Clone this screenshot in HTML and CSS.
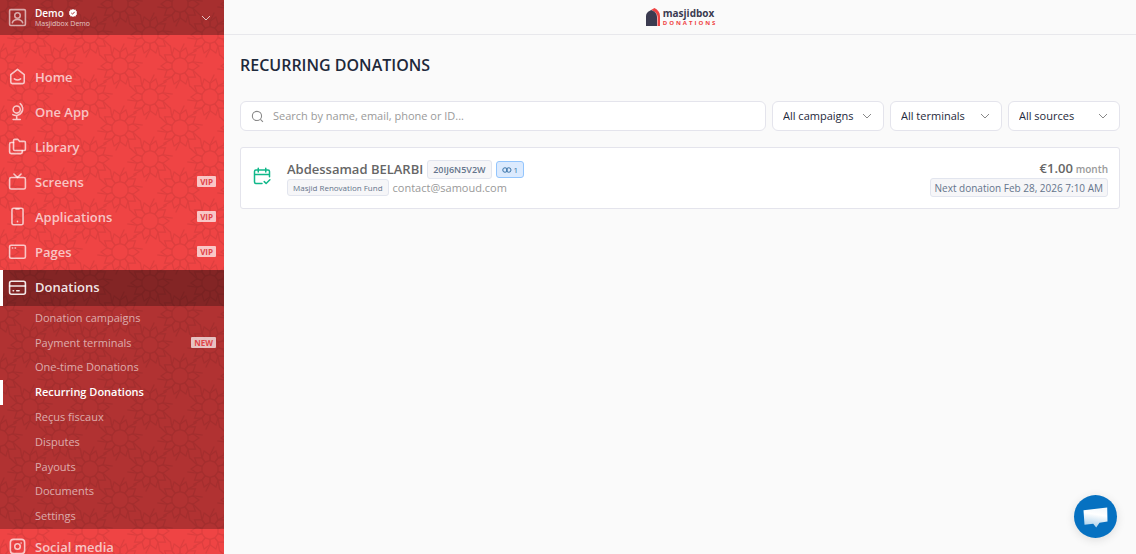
FILE: index.html
```
<!DOCTYPE html>
<html lang="en">
<head>
    <meta charset="UTF-8">
    <meta name="viewport" content="width=device-width, initial-scale=1.0">
    <title>Recurring donations</title>
    <link rel="stylesheet" href="styles.css">
</head>
<body>
    <aside class="sidebar">
        <svg class="pattern" aria-hidden="true">
            <defs>
                <g id="petal" fill="none" stroke="#000" stroke-width="1.2">
                    <path d="M8 -2.600L13 -4.200L19 0L13 4.200L8 2.600z"/>
                    <path d="M13 4.200L20 11"/>
                </g>
                <g id="rosette">
                    <use href="#petal"/>
                    <use href="#petal" transform="rotate(36)"/>
                    <use href="#petal" transform="rotate(72)"/>
                    <use href="#petal" transform="rotate(108)"/>
                    <use href="#petal" transform="rotate(144)"/>
                    <use href="#petal" transform="rotate(180)"/>
                    <use href="#petal" transform="rotate(216)"/>
                    <use href="#petal" transform="rotate(252)"/>
                    <use href="#petal" transform="rotate(288)"/>
                    <use href="#petal" transform="rotate(324)"/>
                </g>
                <pattern id="stars" y="4" width="60" height="62" patternUnits="userSpaceOnUse">
                    <use href="#rosette"/>
                    <use href="#rosette" x="60"/>
                    <use href="#rosette" y="62"/>
                    <use href="#rosette" x="60" y="62"/>
                    <use href="#rosette" x="30" y="31"/>
                </pattern>
            </defs>
            <rect width="100%" height="100%" fill="url(#stars)"/>
        </svg>
        <button type="button" class="account">
            <svg class="icon" viewBox="0 0 24 24"><rect x="2" y="2" width="20" height="20" rx="1.500"/><circle cx="12" cy="9.500" r="3.500"/><path d="M5.500 18.500c1-3 3.500-4 6.500-4s5.500 1 6.500 4"/></svg>
            <span class="account-text">
                <span class="account-name">Demo
                    <svg class="verified" viewBox="0 0 24 24"><path fill="#fff" d="M12 0l3.500 2 4-.2 1.300 3.800L24 8l-1.200 4L24 16l-3.200 2.400-1.300 3.800-4-.2L12 24l-3.500-2-4 .2-1.300-3.800L0 16l1.200-4L0 8l3.200-2.400 1.300-3.800 4 .2z"/><path d="M7 12l3.500 3.500L17 8.500" fill="none" stroke="#a52d2f" stroke-width="3"/></svg>
                </span>
                <span class="account-sub">Masjidbox Demo</span>
            </span>
            <svg class="chevron" viewBox="0 0 12 12"><path d="M2 4l4 4 4-4"/></svg>
        </button>
        <nav class="menu">
            <a href="#" class="menu-item">
                <svg class="icon" viewBox="0 0 24 24"><path d="M3.500 9.500L12 3l8.500 6.500V19a2 2 0 0 1-2 2h-13a2 2 0 0 1-2-2z"/><path d="M8 15c2.500 1.700 5.500 1.700 8 0"/></svg>
                Home
            </a>
            <a href="#" class="menu-item">
                <svg class="icon" viewBox="0 0 24 24"><circle cx="11" cy="9.500" r="4.500"/><path d="M15.500 2A8.500 8.500 0 0 1 6 16M11 17.500V22M6.500 22h9"/></svg>
                One App
            </a>
            <a href="#" class="menu-item">
                <svg class="icon" viewBox="0 0 24 24"><path d="M7 4.500A1.500 1.500 0 0 1 8.500 3h4l2 2.500h6A1.500 1.500 0 0 1 22 7v8.500a1.500 1.500 0 0 1-1.500 1.500h-12A1.500 1.500 0 0 1 7 15.500z"/><path d="M7 7H4a2 2 0 0 0-2 2v10a2 2 0 0 0 2 2h12a2 2 0 0 0 2-2v-2"/></svg>
                Library
            </a>
            <a href="#" class="menu-item">
                <svg class="icon" viewBox="0 0 24 24"><rect x="2" y="7" width="20" height="14.500" rx="2"/><path d="M7.500 2.500L12 7l4.500-4.500"/></svg>
                Screens <span class="tag">VIP</span>
            </a>
            <a href="#" class="menu-item">
                <svg class="icon" viewBox="0 0 24 24"><rect x="5" y="1.500" width="14" height="21" rx="2"/><path d="M10 2.500h4M12 18v.5"/></svg>
                Applications <span class="tag">VIP</span>
            </a>
            <a href="#" class="menu-item">
                <svg class="icon" viewBox="0 0 24 24"><rect x="2" y="4" width="20" height="16.500" rx="2"/><path d="M5.500 7.500h.5M9 7.500h.5"/></svg>
                Pages <span class="tag">VIP</span>
            </a>
            <a href="#" class="menu-item active">
                <svg class="icon" viewBox="0 0 24 24"><rect x="2" y="4" width="20" height="16.500" rx="2.500"/><path d="M2 10h20M6.500 16H7M11 16h3"/></svg>
                Donations
            </a>
            <div class="submenu">
                <a href="#">Donation campaigns</a>
                <a href="#">Payment terminals <span class="tag">NEW</span></a>
                <a href="#">One-time Donations</a>
                <a href="#" class="current">Recurring Donations</a>
                <a href="#">Reçus fiscaux</a>
                <a href="#">Disputes</a>
                <a href="#">Payouts</a>
                <a href="#">Documents</a>
                <a href="#">Settings</a>
            </div>
            <a href="#" class="menu-item">
                <svg class="icon" viewBox="0 0 24 24"><rect x="3" y="3" width="18" height="18" rx="4"/><circle cx="12" cy="12" r="3.500"/><path d="M16.500 7.500h.2"/></svg>
                Social media
            </a>
        </nav>
    </aside>

    <div class="page">
        <header class="topbar">
            <a href="#" class="logo">
                <svg class="logo-mark" viewBox="0 0 14 18"><path fill="#ef4444" d="M5 2l3.500-2C12 2 14 4.500 14 8v10h-2.500V9C11.500 5.500 9 3.500 5 2z"/><path fill="#3b3b50" d="M0 18V8c0-3 2-4.500 5.200-6C9 3.500 11 5.500 11 8.500V18z"/></svg>
                <span class="logo-text">
                    <span class="logo-name">masjidbox</span>
                    <span class="logo-sub">DONATIONS</span>
                </span>
            </a>
        </header>
        <main class="content">
            <h1>RECURRING DONATIONS</h1>
            <form class="filters">
                <label class="search">
                    <svg class="search-icon" viewBox="0 0 24 24"><circle cx="11" cy="11" r="8.500"/><path d="M17.500 17.500L22 22"/></svg>
                    <input type="search" aria-label="Search donations" placeholder="Search by name, email, phone or ID...">
                </label>
                <select aria-label="Campaign"><option>All campaigns</option></select>
                <select aria-label="Terminal"><option>All terminals</option></select>
                <select aria-label="Source"><option>All sources</option></select>
            </form>
            <article class="donation">
                <svg class="calendar" viewBox="0 0 24 24"><path d="M22 13V6a2 2 0 0 0-2-2H4a2 2 0 0 0-2 2v14a2 2 0 0 0 2 2h8M2 10h20M7 1.500v5M17 1.500v5M15 19.500l2.500 2.500 5-5"/></svg>
                <div class="donor">
                    <div class="row">
                        <span class="name">Abdessamad BELARBI</span>
                        <span class="badge code">20IJ6N5V2W</span>
                        <span class="badge count"><svg viewBox="0 0 20 16"><circle cx="6" cy="8" r="4.500"/><circle cx="13.500" cy="8" r="4.500"/></svg>1</span>
                    </div>
                    <div class="row">
                        <span class="badge fund">Masjid Renovation Fund</span>
                        <span class="email">contact@samoud.com</span>
                    </div>
                </div>
                <div class="amount">
                    <div><span class="price">€1.00</span> <span class="period">month</span></div>
                    <span class="badge next">Next donation Feb 28, 2026 7:10 AM</span>
                </div>
            </article>
        </main>
    </div>

    <button type="button" class="chat" aria-label="Open chat">
        <svg viewBox="0 0 26 22"><defs><linearGradient id="bubble" x1=".6" y1="0" x2=".4" y2="1"><stop offset="0" stop-color="#f2f8fc"/><stop offset=".35" stop-color="#fff"/><stop offset="1" stop-color="#a9cfea"/></linearGradient></defs><path fill="url(#bubble)" d="M.5 4.200L24.200 1.500l.3 14-8 1.300-3.300 4.700-3-3.700-8.700 1z"/></svg>
    </button>
</body>
</html>
```
FILE: styles.css
```
* {
    box-sizing: border-box;
}
body {
    margin: 0;
    display: flex;
    height: 100vh;
    overflow: hidden;
    font-family: "Open Sans", "Noto Sans", sans-serif;
    font-size: 11px;
    color: #1e293b;
    background-color: #fafafa;
}
a {
    color: inherit;
    text-decoration: none;
}
button,
input,
select {
    font: inherit;
}
svg {
    flex: none;
}

/* Sidebar */
.sidebar {
    position: relative;
    flex: 0 0 224px;
    overflow: hidden;
    background-color: #ef4444;
}
.pattern {
    position: absolute;
    inset: 0;
    width: 100%;
    height: 100%;
    opacity: 0.07;
}
.account {
    position: relative;
    display: flex;
    align-items: center;
    width: 100%;
    height: 35px;
    padding: 0 12px 0 8px;
    border: 0;
    color: #fff;
    text-align: left;
    background-color: rgba(0, 0, 0, 0.3);
    cursor: pointer;
}
.icon {
    width: 19px;
    height: 19px;
    margin-right: 8px;
    fill: none;
    stroke: currentColor;
    stroke-width: 2;
    stroke-linecap: round;
    stroke-linejoin: round;
}
.account .icon {
    opacity: 0.6;
}
.account-text {
    flex: 1;
}
.account-name {
    display: flex;
    align-items: center;
    gap: 5px;
    font-size: 10px;
    font-weight: 600;
    line-height: 12px;
}
.verified {
    width: 8px;
    height: 8px;
}
.account-sub {
    display: block;
    font-size: 7px;
    line-height: 9px;
    opacity: 0.7;
}
.chevron {
    width: 12px;
    height: 12px;
    fill: none;
    stroke: currentColor;
    stroke-width: 1;
    opacity: 0.7;
}
.menu {
    position: relative;
    padding-top: 24px;
}
.menu-item {
    display: flex;
    align-items: center;
    height: 35px;
    padding: 0 8px;
    font-size: 13px;
    font-weight: 600;
    color: rgba(255, 255, 255, 0.7);
}
.menu-item.active {
    height: 36px;
    margin-top: 1px;
    padding: 0 8px 2px 5px;
    border-left: 3px solid #fff;
    color: rgba(255, 255, 255, 0.9);
    background-color: rgba(0, 0, 0, 0.45);
}
.tag {
    margin-left: auto;
    padding: 0 3px;
    border-radius: 1px;
    font-size: 8px;
    font-weight: 700;
    line-height: 11px;
    color: #e04447;
    background-color: rgba(255, 255, 255, 0.7);
}
.submenu {
    display: grid;
    grid-template-rows: repeat(9, 1fr);
    min-height: 223px;
    background-color: rgba(0, 0, 0, 0.26);
}
.submenu a {
    display: flex;
    align-items: center;
    padding: 0 8px 2px 35px;
    color: rgba(255, 255, 255, 0.6);
}
.submenu .current {
    padding-left: 32px;
    border-left: 3px solid #fff;
    font-weight: 600;
    color: #fff;
}

/* Page */
.page {
    flex: 1;
    min-width: 0;
}
.topbar {
    display: flex;
    align-items: center;
    justify-content: center;
    height: 35px;
    border-bottom: 1px solid #e8e8ec;
}
.logo {
    display: flex;
    align-items: center;
    gap: 3px;
}
.logo-mark {
    width: 14px;
    height: 18px;
}
.logo-text {
    display: flex;
    flex-direction: column;
}
.logo-name {
    font-size: 10px;
    font-weight: 700;
    line-height: 11px;
    color: #3b3b50;
}
.logo-sub {
    font-size: 6px;
    font-weight: 700;
    line-height: 8px;
    letter-spacing: 2px;
    margin-right: -8px;
    color: #ef4444;
}
.content {
    padding: 18px 16px;
}
h1 {
    margin: 0 0 24px;
    font-size: 16px;
    font-weight: 600;
    line-height: 24px;
}
.filters {
    display: flex;
    gap: 6px;
    margin-bottom: 16px;
}
.search {
    display: flex;
    align-items: center;
    flex: 1;
    gap: 9px;
    height: 30px;
    padding: 0 10px;
    border: 1px solid #e4e4ec;
    border-radius: 6px;
    background-color: #fff;
}
.search-icon {
    width: 13px;
    height: 13px;
    fill: none;
    stroke: #888;
    stroke-width: 2;
}
.search input {
    flex: 1;
    min-width: 0;
    padding: 0 0 2px;
    border: 0;
    outline: none;
    background: none;
}
.search input::placeholder {
    color: #9a9a9a;
}
select {
    width: 112px;
    height: 30px;
    padding: 0 10px 2px;
    border: 1px solid #e4e4ec;
    border-radius: 6px;
    color: #1e293b;
    appearance: none;
    background: #fff url("data:image/svg+xml,%3Csvg xmlns='http://www.w3.org/2000/svg' viewBox='0 0 12 12'%3E%3Cpath d='M2 4l4 4 4-4' fill='none' stroke='%23888'/%3E%3C/svg%3E") no-repeat right 10px center / 12px;
}
.donation {
    display: flex;
    align-items: center;
    padding: 11px;
    border: 1px solid #e4e4ec;
    border-radius: 3px;
    background-color: #fff;
}
.calendar {
    width: 18px;
    height: 18px;
    margin: 0 16px 4px 1px;
    fill: none;
    stroke: #10b88a;
    stroke-width: 2;
    stroke-linecap: round;
    stroke-linejoin: round;
}
.donor {
    flex: 1;
}
.row {
    display: flex;
    align-items: center;
    gap: 4px;
}
.name,
.price {
    font-size: 13px;
    font-weight: 600;
    line-height: 19px;
    color: #666;
}
.badge {
    display: inline-flex;
    align-items: center;
    height: 17px;
    padding: 0 5px;
    border: 1px solid #e2e5ee;
    border-radius: 3px;
    color: #64748b;
    background-color: #f6f6f8;
}
.code {
    height: 19px;
    font-size: 9px;
    font-weight: 600;
}
.count {
    gap: 2px;
    font-size: 8px;
    color: #3973a8;
    border-color: #93c5fd;
    background-color: #dbeafe;
}
.count svg {
    width: 10px;
    height: 8px;
    fill: none;
    stroke: currentColor;
    stroke-width: 2;
}
.fund {
    font-size: 8px;
}
.email {
    color: #999;
}
.amount {
    text-align: right;
}
.period {
    font-size: 10px;
    font-weight: 600;
    color: #999;
}
.next {
    height: 19px;
    padding: 0 4px;
    font-size: 10px;
}

/* Chat launcher sits over the page */
.chat {
    position: fixed;
    right: 19px;
    bottom: 16px;
    display: flex;
    align-items: center;
    justify-content: center;
    width: 43px;
    height: 43px;
    padding: 0;
    border: 0;
    border-radius: 50%;
    background-color: #0671c1;
    box-shadow: 0 2px 10px rgba(0, 0, 0, 0.12);
    cursor: pointer;
}
.chat svg {
    width: 26px;
    height: 22px;
}
```
